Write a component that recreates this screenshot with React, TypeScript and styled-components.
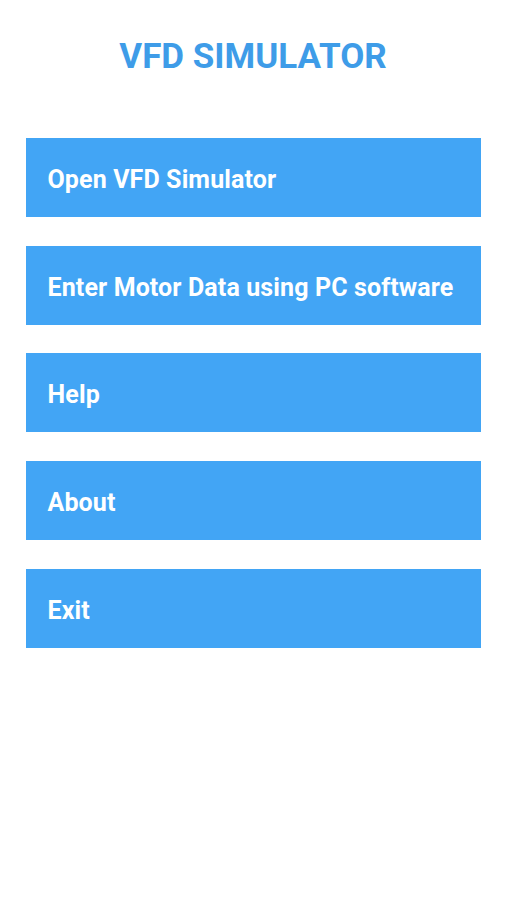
import styled, { createGlobalStyle } from "styled-components"

const GlobalStyle = createGlobalStyle`
    body {
        margin: 0;
        background: #ffffff;
        font-family: Roboto, "Liberation Sans", sans-serif;
    }
`

const Screen = styled.div`
    width: 506px;
    height: 900px;
    display: flex;
    flex-direction: column;
    align-items: center;
    background: #ffffff;
`

const Title = styled.h1`
    margin: 36px 0 0;
    height: 42px;
    font-size: 35px;
    line-height: 42px;
    font-weight: 700;
    color: #3e9ce8;
`

const Menu = styled.div`
    width: 455px;
    margin-top: 60px;
    display: flex;
    flex-direction: column;
    gap: 28.7px;
`

const MenuButton = styled.button`
    height: 79px;
    display: flex;
    align-items: center;
    padding: 4px 0 0 22px;
    background-color: #42a5f5;
    border: none;
    border-radius: 0;
    color: #ffffff;
    font-family: Roboto, "Liberation Sans", sans-serif;
    font-size: 25px;
    font-weight: 700;
    letter-spacing: 0.12px;
    text-align: left;
    cursor: pointer;
`

const itens = [
    "Open VFD Simulator",
    "Enter Motor Data using PC software",
    "Help",
    "About",
    "Exit",
]

export default function App() {
    return (
        <>
            <GlobalStyle />
            <Screen>
                <Title>VFD SIMULATOR</Title>
                <Menu>
                    {itens.map((item) => (
                        <MenuButton key={item}>{item}</MenuButton>
                    ))}
                </Menu>
            </Screen>
        </>
    )
}
